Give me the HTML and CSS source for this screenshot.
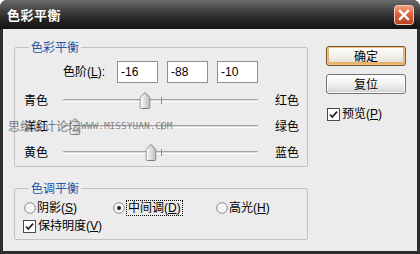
FILE: index.html
```html
<!DOCTYPE html>
<html lang="zh-CN">
<head>
<meta charset="utf-8">
<title>色彩平衡</title>
<link rel="stylesheet" href="styles.css">
</head>
<body>
<div class="window">
  <div class="titlebar">
    <span class="title">色彩平衡</span>
    <span class="close">
      <svg width="20" height="20" viewBox="0 0 20 20">
        <defs>
          <linearGradient id="cg" x1="0" y1="0" x2="0" y2="1">
            <stop offset="0" stop-color="#f0a184"/>
            <stop offset="0.5" stop-color="#d9603c"/>
            <stop offset="1" stop-color="#b8401f"/>
          </linearGradient>
        </defs>
        <rect x="0.5" y="0.5" width="19" height="19" rx="3" fill="url(#cg)" stroke="#f3c9b8"/>
        <path d="M6 6 L14 14 M14 6 L6 14" stroke="#fff" stroke-width="2.4" stroke-linecap="square"/>
      </svg>
    </span>
  </div>
  <div class="client">
    <div class="main">
      <fieldset class="group g1">
        <legend>色彩平衡</legend>
        <div class="levels">
          <span class="levels-label">色阶(<u>L</u>):</span>
          <span class="input">-16</span>
          <span class="input">-88</span>
          <span class="input">-10</span>
        </div>
        <div class="sliders">
          <div class="slider-row">
            <span class="lab">青色</span>
            <div class="track">
              <span class="tick"></span>
              <svg class="thumb" style="left:42%" width="11" height="17" viewBox="0 0 11 17"><defs><linearGradient id="t1" x1="0" y1="0" x2="1" y2="0"><stop offset="0" stop-color="#ffffff"/><stop offset="1" stop-color="#b9b9b9"/></linearGradient></defs><path d="M0.5 5.5 L5.5 0.5 L10.5 5.5 V15 Q10.5 16.5 9 16.5 H2 Q0.5 16.5 0.5 15 Z" fill="url(#t1)" stroke="#7e7e7e"/></svg>
            </div>
            <span class="lab right">红色</span>
          </div>
          <div class="slider-row">
            <span class="lab">洋红</span>
            <div class="track">
              <span class="tick"></span>
              <svg class="thumb" style="left:6%" width="11" height="17" viewBox="0 0 11 17"><defs><linearGradient id="t2" x1="0" y1="0" x2="1" y2="0"><stop offset="0" stop-color="#ffffff"/><stop offset="1" stop-color="#b9b9b9"/></linearGradient></defs><path d="M0.5 5.5 L5.5 0.5 L10.5 5.5 V15 Q10.5 16.5 9 16.5 H2 Q0.5 16.5 0.5 15 Z" fill="url(#t2)" stroke="#7e7e7e"/></svg>
            </div>
            <span class="lab right">绿色</span>
          </div>
          <div class="slider-row">
            <span class="lab">黄色</span>
            <div class="track">
              <span class="tick"></span>
              <svg class="thumb" style="left:45%" width="11" height="17" viewBox="0 0 11 17"><defs><linearGradient id="t3" x1="0" y1="0" x2="1" y2="0"><stop offset="0" stop-color="#ffffff"/><stop offset="1" stop-color="#b9b9b9"/></linearGradient></defs><path d="M0.5 5.5 L5.5 0.5 L10.5 5.5 V15 Q10.5 16.5 9 16.5 H2 Q0.5 16.5 0.5 15 Z" fill="url(#t3)" stroke="#7e7e7e"/></svg>
            </div>
            <span class="lab right">蓝色</span>
          </div>
        </div>
      </fieldset>
      <fieldset class="group g2">
        <legend>色调平衡</legend>
        <div class="radios">
          <span class="radio r1">
            <svg width="12" height="12" viewBox="0 0 12 12"><circle cx="6" cy="6" r="5.3" fill="#f6f6f6" stroke="#8c8c8c"/></svg>
            <span>阴影(<u>S</u>)</span>
          </span>
          <span class="radio r2">
            <svg width="12" height="12" viewBox="0 0 12 12"><circle cx="6" cy="6" r="5.3" fill="#f6f6f6" stroke="#8c8c8c"/><circle cx="6" cy="6" r="2" fill="#222"/></svg>
            <span class="focus">中间调(<u>D</u>)</span>
          </span>
          <span class="radio r3">
            <svg width="12" height="12" viewBox="0 0 12 12"><circle cx="6" cy="6" r="5.3" fill="#f6f6f6" stroke="#8c8c8c"/></svg>
            <span>高光(<u>H</u>)</span>
          </span>
        </div>
        <div class="check-row">
          <span class="check">
            <svg width="13" height="13" viewBox="0 0 13 13"><rect x="0.5" y="0.5" width="12" height="12" fill="#fff" stroke="#4a4a4a"/><path d="M3 6.5 L5.3 9 L10 3.6" fill="none" stroke="#222" stroke-width="1.8"/></svg>
            <span>保持明度(<u>V</u>)</span>
          </span>
        </div>
      </fieldset>
    </div>
    <div class="side">
      <button class="btn default">确定</button>
      <button class="btn">复位</button>
      <span class="check preview">
        <svg width="13" height="13" viewBox="0 0 13 13"><rect x="0.5" y="0.5" width="12" height="12" fill="#fff" stroke="#4a4a4a"/><path d="M3 6.5 L5.3 9 L10 3.6" fill="none" stroke="#222" stroke-width="1.8"/></svg>
        <span>预览(<u>P</u>)</span>
      </span>
    </div>
  </div>
  <div class="watermark">思缘设计论坛<span class="wm-url">WWW.MISSYUAN.COM</span></div>
</div>
</body>
</html>
```

FILE: styles.css
```css
* { box-sizing: border-box; }
html, body { margin: 0; padding: 0; }
body {
  width: 420px;
  height: 254px;
  overflow: hidden;
  background: #ffffff;
  font-family: "Liberation Sans", "Noto Sans CJK SC", sans-serif;
  font-size: 12px;
  color: #000;
}
u { text-decoration: underline; text-underline-offset: 1px; }

.window {
  position: relative;
  width: 420px;
  height: 254px;
  display: flex;
  flex-direction: column;
  background: #2e2e2e;
  border-radius: 7px 7px 0 0;
  overflow: hidden;
}

.titlebar {
  height: 29px;
  flex: none;
  display: flex;
  align-items: center;
  justify-content: space-between;
  padding: 0 6px 0 7px;
  background: linear-gradient(#6b6b6b 0%, #444 35%, #232323 70%, #141414 100%);
}
.title {
  color: #fff;
  font-family: "Noto Sans CJK SC", sans-serif;
  font-weight: bold;
  font-size: 13px;
  line-height: 16px;
  letter-spacing: 0.5px;
  margin-top: 1px;
}
.close { display: block; width: 20px; height: 20px; margin-top: 1px; }
.close svg { display: block; }

.client {
  flex: 1;
  margin: 0 3px 3px;
  background: #ececec;
  display: flex;
  padding: 11px 0 0 11px;
}

.main {
  width: 294px;
  display: flex;
  flex-direction: column;
}

.group {
  margin: 0;
  padding: 0;
  min-width: 0;
  border: 1px solid #c2c2c2;
  border-radius: 2px;
}
.group legend {
  margin-left: 14px;
  padding: 0 2px;
  color: #2154ab;
  font-family: "Noto Sans CJK SC", sans-serif;
  font-size: 12px;
  line-height: 14px;
}
.g1 { padding-bottom: 1px; }
.g2 { margin-top: 14px; padding-bottom: 5px; }

.levels {
  display: flex;
  align-items: center;
  height: 22px;
  margin-top: 7px;
  padding-left: 48px;
  gap: 9px;
}
.levels-label {
  width: 45px;
  line-height: 14px;
}
.input {
  width: 41px;
  height: 22px;
  background: #fff;
  border: 1px solid #8f8f8f;
  padding-left: 3px;
  line-height: 20px;
  font-size: 12px;
}

.sliders { margin-top: 4px; }
.slider-row {
  display: flex;
  align-items: center;
  height: 26px;
  padding-left: 9px;
}
.lab {
  width: 39px;
  line-height: 14px;
  font-family: "Noto Sans CJK SC", sans-serif;
}
.lab.right { width: auto; margin-left: 17px; }
.track {
  position: relative;
  width: 195px;
  height: 3px;
  border-top: 1px solid #a3a3a3;
  border-bottom: 1px solid #ffffff;
  background: #dadada;
  border-radius: 1px;
}
.tick {
  position: absolute;
  left: 50%;
  top: -3px;
  width: 1px;
  height: 7px;
  background: #8e8e8e;
}
.thumb {
  position: absolute;
  top: -8px;
  transform: translateX(-5.5px);
  display: block;
}

.radios {
  display: flex;
  align-items: center;
  height: 16px;
  margin-top: 5px;
  padding-left: 9px;
}
.radio {
  display: flex;
  align-items: center;
  gap: 1px;
  line-height: 14px;
}
.radio svg { display: block; flex: none; }
.r1 { width: 89px; }
.r2 { width: 103px; }
.focus {
  outline: 1px dotted #000;
  outline-offset: 0;
  padding: 0 1px;
  margin-left: 1px;
}

.check-row {
  display: flex;
  align-items: center;
  height: 16px;
  margin-top: 2px;
  padding-left: 8px;
}
.check {
  display: flex;
  align-items: center;
  gap: 2px;
  line-height: 14px;
}
.check svg { display: block; flex: none; }

.side {
  margin-left: 18px;
  padding-top: 6px;
  display: flex;
  flex-direction: column;
  align-items: flex-start;
}
.btn {
  width: 80px;
  height: 20px;
  padding: 0;
  font-family: "Noto Sans CJK SC", sans-serif;
  font-size: 12px;
  line-height: 16px;
  color: #000;
  border: 1px solid #747474;
  border-radius: 3px;
  background: linear-gradient(#ffffff 0%, #f3f3f3 45%, #dcdcdc 85%, #c9c9c9 100%);
  box-shadow: inset 0 0 0 1px #fafafa;
}
.btn.default {
  border-color: #6f5a3c;
  box-shadow: inset 0 0 0 1px #f1c27f, inset 0 -1px 0 2px #e7b46c;
  background: linear-gradient(#fffdf8 0%, #f3f1ec 50%, #dcd8cf 100%);
}
.btn + .btn { margin-top: 8px; }
.preview { margin-top: 13px; margin-left: 1px; }

.watermark {
  position: absolute;
  left: 8px;
  top: 118px;
  display: flex;
  align-items: center;
  color: #707070;
  font-family: "Noto Sans CJK SC", sans-serif;
  font-size: 12px;
  line-height: 14px;
  opacity: 0.9;
}
.wm-url {
  margin-left: 1px;
  font-family: "DejaVu Sans Mono", monospace;
  font-size: 9.5px;
  color: #7a7a7a;
  margin-top: 1px;
}
```
